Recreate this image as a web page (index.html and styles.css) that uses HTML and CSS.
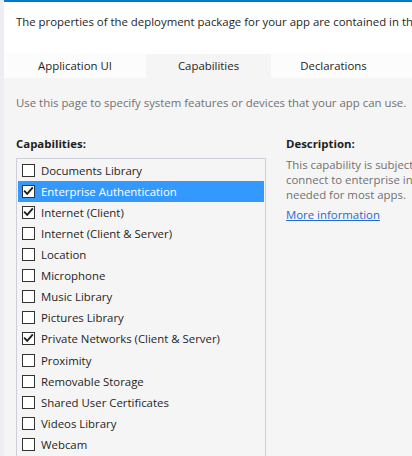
FILE: index.html
```html
<!DOCTYPE html>
<html>
<head>
<meta charset="utf-8">
<link rel="stylesheet" href="styles.css">
</head>
<body>
<div class="page">
  <div class="rail"></div>
  <div class="main">
    <div class="header">
      <p class="intro">The properties of the deployment package for your app are contained in the app manifest file.</p>
    </div>
    <div class="tabs">
      <div class="tab">Application UI</div>
      <div class="tab active">Capabilities</div>
      <div class="tab">Declarations</div>
    </div>
    <div class="content">
      <p class="hint">Use this page to specify system features or devices that your app can use.</p>
      <div class="columns">
        <div class="caps">
          <div class="label">Capabilities:</div>
          <ul class="list">
            <li class="item"><span class="box"></span>Documents Library</li>
            <li class="item selected"><span class="box"><svg class="tick" viewBox="0 0 11 11"><path d="M1.8 5.4 L4.2 7.9 L9.2 2.2"/></svg></span>Enterprise Authentication</li>
            <li class="item"><span class="box"><svg class="tick" viewBox="0 0 11 11"><path d="M1.8 5.4 L4.2 7.9 L9.2 2.2"/></svg></span>Internet (Client)</li>
            <li class="item"><span class="box"></span>Internet (Client &amp; Server)</li>
            <li class="item"><span class="box"></span>Location</li>
            <li class="item"><span class="box"></span>Microphone</li>
            <li class="item"><span class="box"></span>Music Library</li>
            <li class="item"><span class="box"></span>Pictures Library</li>
            <li class="item"><span class="box"><svg class="tick" viewBox="0 0 11 11"><path d="M1.8 5.4 L4.2 7.9 L9.2 2.2"/></svg></span>Private Networks (Client &amp; Server)</li>
            <li class="item"><span class="box"></span>Proximity</li>
            <li class="item"><span class="box"></span>Removable Storage</li>
            <li class="item"><span class="box"></span>Shared User Certificates</li>
            <li class="item"><span class="box"></span>Videos Library</li>
            <li class="item"><span class="box"></span>Webcam</li>
          </ul>
        </div>
        <div class="desc">
          <div class="label">Description:</div>
          <p class="desc-text">This capability is subject to special review requirements.<br>connect to enterprise intranet resources using domain credentials. It is not<br>needed for most apps.</p>
          <a class="more" href="#">More information</a>
        </div>
      </div>
    </div>
  </div>
</div>
</body>
</html>
```
FILE: styles.css
```css
html, body {
  margin: 0;
  padding: 0;
  height: 100%;
  overflow: hidden;
}
body {
  font-family: "Open Sans", "Noto Sans", sans-serif;
  font-size: 11.4px;
  color: #1e1e1e;
  background: #f5f5f5;
}
.page {
  display: flex;
  height: 456px;
}
.rail {
  width: 4px;
  flex: none;
  background: #eeeef2;
}
.main {
  flex: 1;
  min-width: 0;
  display: flex;
  flex-direction: column;
  overflow: hidden;
}
.header {
  background: #ffffff;
  border-top: 2px solid #007acc;
  height: 57px;
  box-sizing: border-box;
}
.intro {
  margin: 0;
  padding: 12px 0 0 12px;
  white-space: nowrap;
  line-height: 16px;
}
.tabs {
  display: flex;
  height: 25px;
  background: #fcfcfc;
}
.tab {
  width: 125px;
  display: flex;
  align-items: center;
  justify-content: center;
}
.tab:first-child {
  width: 142px;
}
.tab.active {
  background: #f5f5f5;
}
.content {
  flex: 1;
  padding: 0 0 0 12px;
}
.hint {
  margin: 17px 0 0 0;
  color: #717171;
  white-space: nowrap;
  line-height: 16px;
}
.columns {
  display: flex;
  margin-top: 25px;
}
.caps {
  width: 250px;
  flex: none;
}
.label {
  font-weight: bold;
  line-height: 16px;
  height: 16px;
}
.list {
  list-style: none;
  margin: 6px 0 0 0;
  padding: 1px;
  border: 1px solid #ccced8;
  border-bottom: none;
  width: 250px;
  box-sizing: border-box;
  background: #f5f5f5;
}
.item {
  height: 21.1px;
  display: flex;
  align-items: center;
  white-space: nowrap;
}
.item.selected {
  background: #3399ff;
  color: #ffffff;
}
.box {
  width: 13px;
  height: 13px;
  box-sizing: border-box;
  border: 1px solid #333333;
  background: #ffffff;
  margin: 0 6px 0 4px;
  flex: none;
  display: flex;
}
.tick {
  width: 11px;
  height: 11px;
  fill: none;
  stroke: #1e1e1e;
  stroke-width: 1.9;
  stroke-linecap: square;
  stroke-linejoin: miter;
}
.desc {
  margin-left: 20px;
  white-space: nowrap;
}
.desc-text {
  margin: 5px 0 0 0;
  color: #717171;
  line-height: 15px;
  white-space: nowrap;
}
.more {
  display: inline-block;
  margin-top: 5px;
  color: #1e6ad2;
  text-decoration: underline;
}
```
